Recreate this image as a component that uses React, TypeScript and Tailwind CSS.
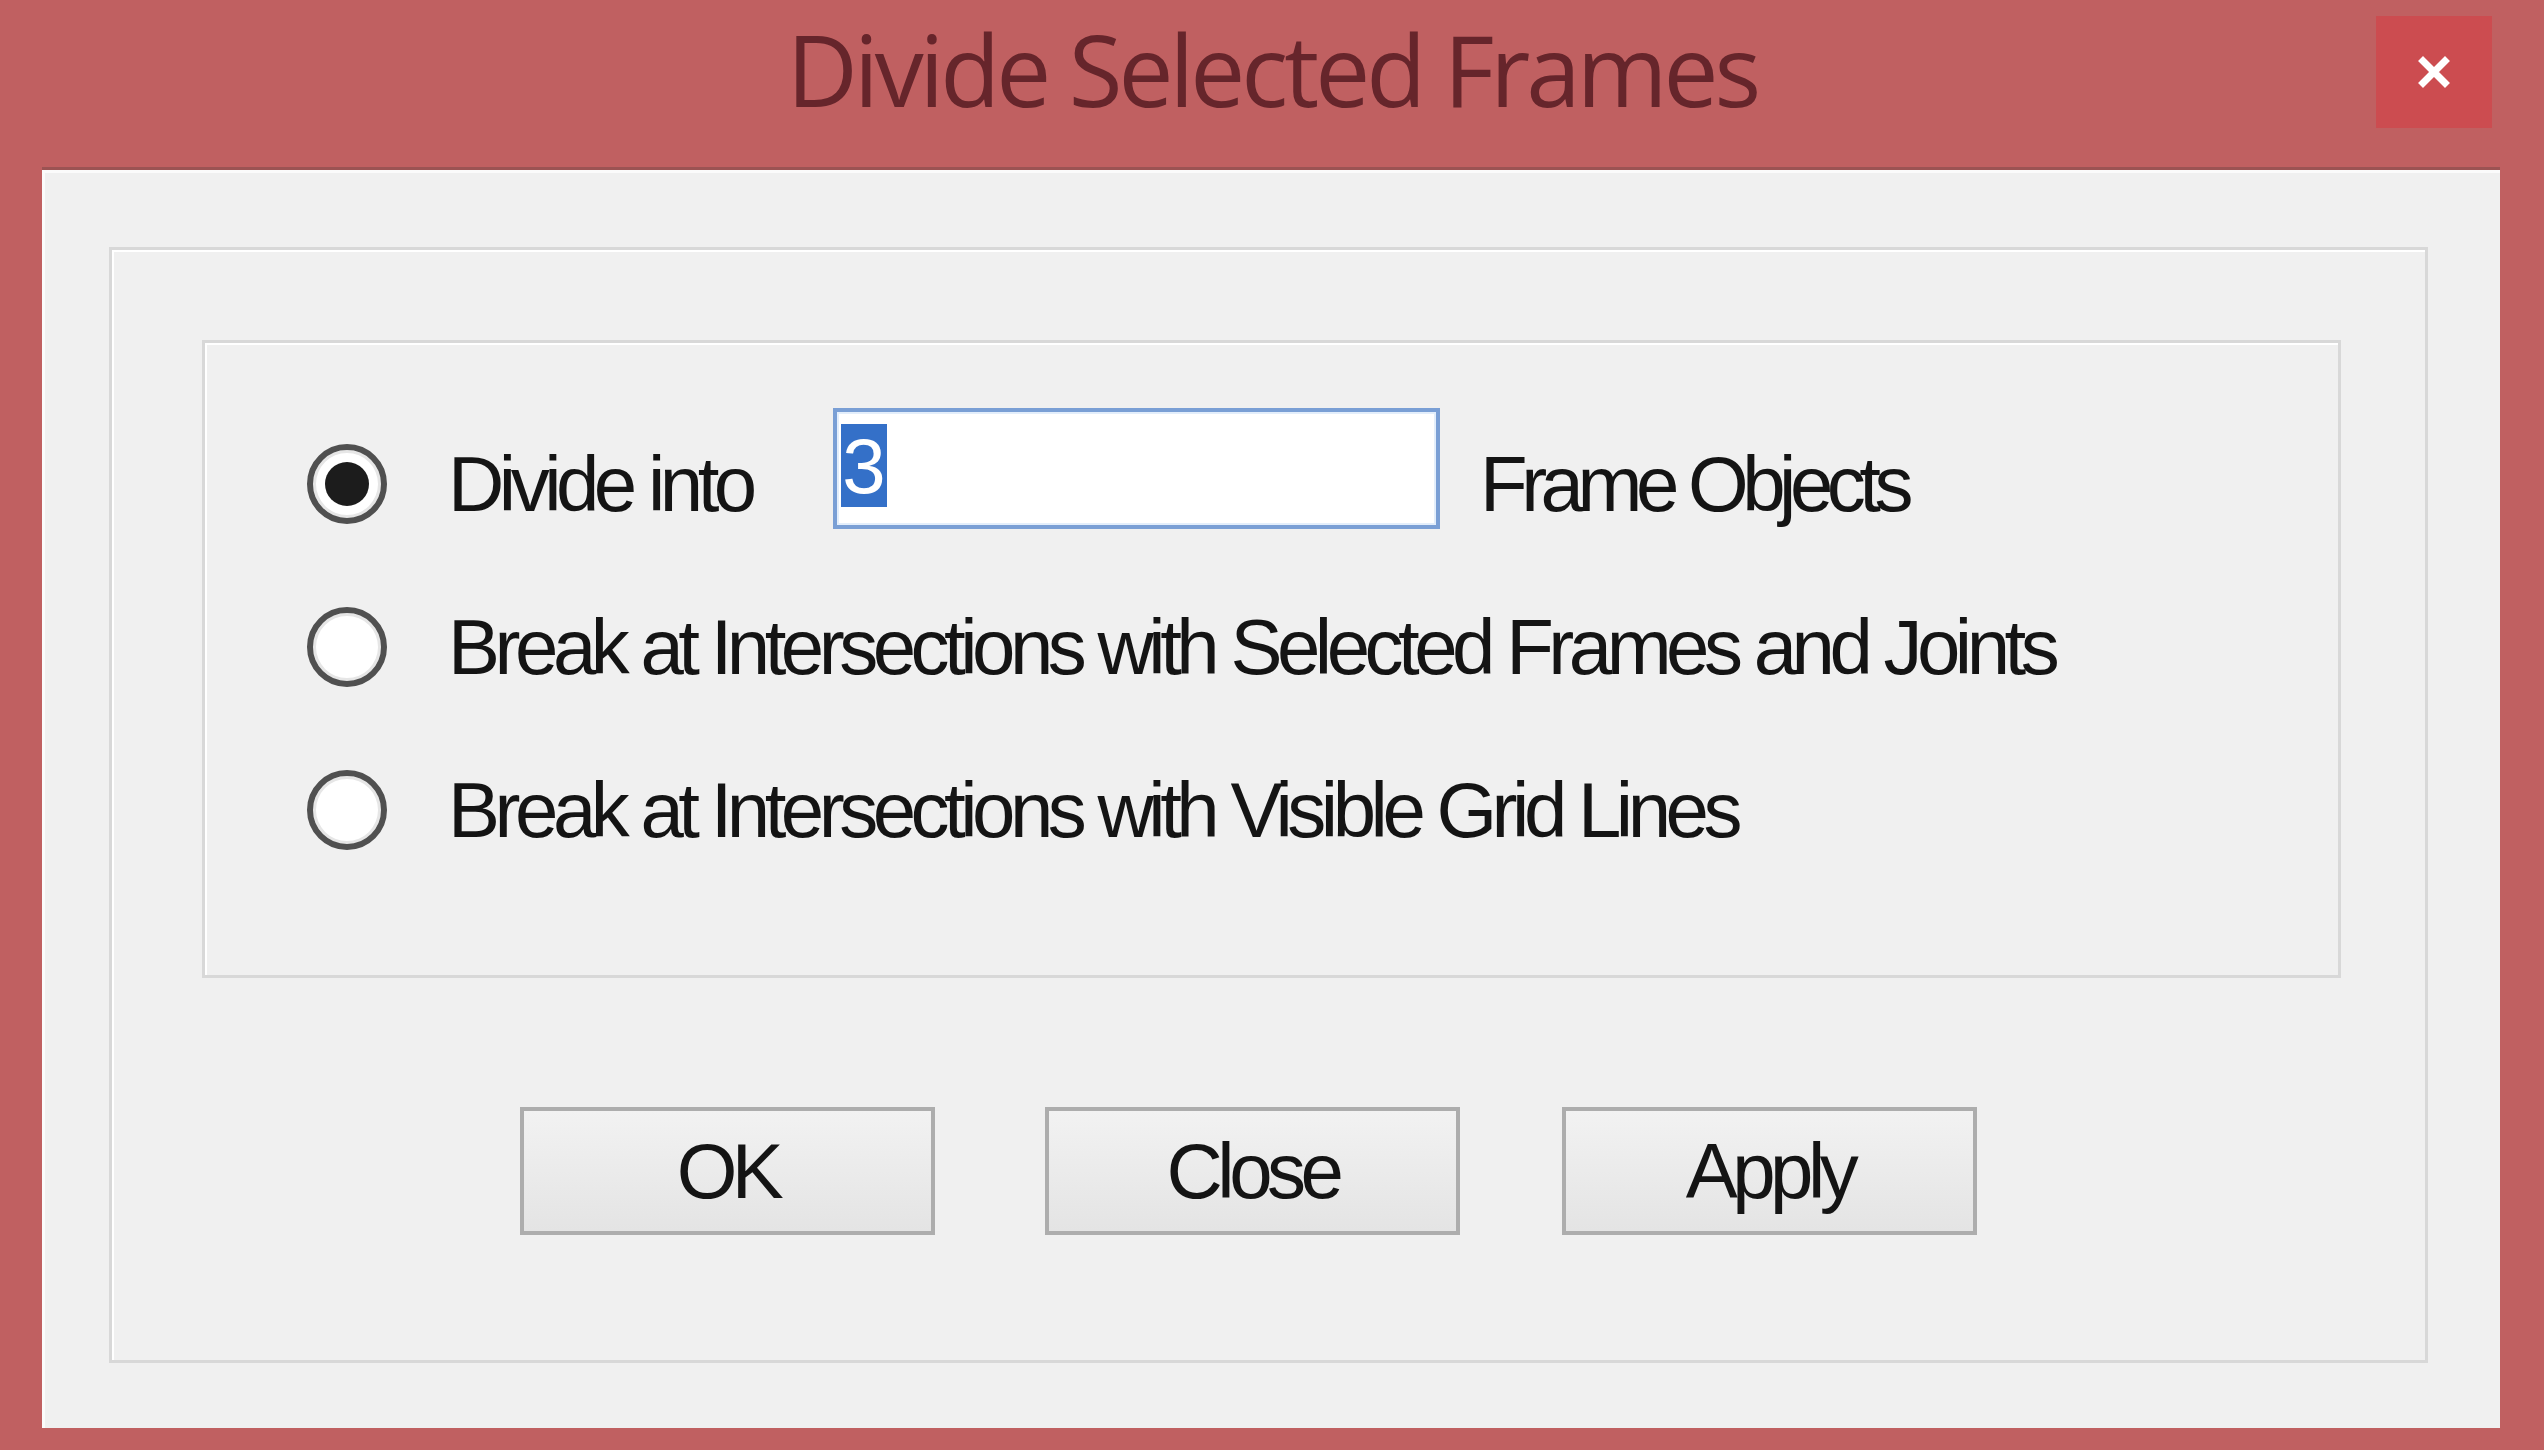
import React from "react";

const label = "font-['Liberation_Sans',Arial,sans-serif] text-[78px] leading-[78px] tracking-[-5.5px] text-[#141414] whitespace-nowrap";

const Radio: React.FC<{ checked?: boolean }> = ({ checked }) => (
  <div className="flex h-[80px] w-[80px] shrink-0 items-center justify-center rounded-full border-[6px] border-[#505050] bg-white shadow-[inset_0_0_0_3px_#e6e6e6]">
    {checked && <div className="h-[44px] w-[44px] rounded-full bg-[#1c1c1c]" />}
  </div>
);

const Button: React.FC<{ text: string; className?: string }> = ({ text, className = "" }) => (
  <div
    className={`flex h-[128px] w-[415px] items-center justify-center border-[4px] border-[#adadad] bg-gradient-to-b from-[#f2f2f2] to-[#e4e4e4] ${className}`}
  >
    <span className={label}>{text}</span>
  </div>
);

export default function App() {
  const options = [
    "Break at Intersections with Selected Frames and Joints",
    "Break at Intersections with Visible Grid Lines",
  ];

  return (
    <div className="flex h-[1450px] w-[2544px] flex-col bg-[#c06061]">
      {/* title bar */}
      <div className="flex h-[167px] shrink-0 items-start">
        <div className="flex-1" />
        <div className="ml-[52px] pt-[20px] font-['Open_Sans','Noto_Sans',sans-serif] text-[98px] leading-[98px] tracking-[-4px] text-[#66252b]">
          Divide Selected Frames
        </div>
        <div className="flex flex-1 justify-end pr-[52px] pt-[16px]">
          <div className="flex h-[112px] w-[116px] items-center justify-center bg-[#cc4c50]">
            <svg width="32" height="32" viewBox="0 0 32 32">
              <path d="M5 5 L27 27 M27 5 L5 27" stroke="#fff" strokeWidth="7" strokeLinecap="square" />
            </svg>
          </div>
        </div>
      </div>

      {/* client area */}
      <div className="mx-[42px] mr-[44px] flex h-[1261px] shrink-0 flex-col border-t-[3px] border-[#9b5353] bg-[#f0f0f0] shadow-[inset_3px_3px_0_#fbfbfb]">
        <div className="ml-[67px] mr-[72px] mt-[77px] h-[1116px] border-[3px] border-[#d8d8d8] pl-[90px] pr-[84px] pt-[90px] shadow-[inset_2px_2px_0_#ffffff]">
          <div className="h-[638px] border-[3px] border-[#d8d8d8] pl-[102px] pt-[59px] shadow-[inset_2px_2px_0_#ffffff]">
            <div className="flex h-[163px] items-center">
              <Radio checked />
              <span className={`${label} ml-[61px] w-[385px]`}>Divide into</span>
              <div className="mb-[30px] flex h-[121px] w-[607px] items-start border-[4px] border-[#7a9fd5] bg-white pl-[4px] pt-[12px] shadow-[inset_0_0_0_2px_#e3eefb]">
                <span className={`${label} flex h-[83px] w-[46px] items-center justify-center bg-[#3470c8] text-white tracking-normal`}>
                  3
                </span>
              </div>
              <span className={`${label} ml-[40px] tracking-[-6.5px]`}>Frame Objects</span>
            </div>
            {options.map((o) => (
              <div key={o} className="flex h-[163px] items-center">
                <Radio />
                <span className={`${label} ml-[61px]`}>{o}</span>
              </div>
            ))}
          </div>

          <div className="ml-[318px] mt-[129px] flex">
            <Button text="OK" />
            <Button text="Close" className="ml-[110px]" />
            <Button text="Apply" className="ml-[102px]" />
          </div>
        </div>
      </div>
    </div>
  );
}
